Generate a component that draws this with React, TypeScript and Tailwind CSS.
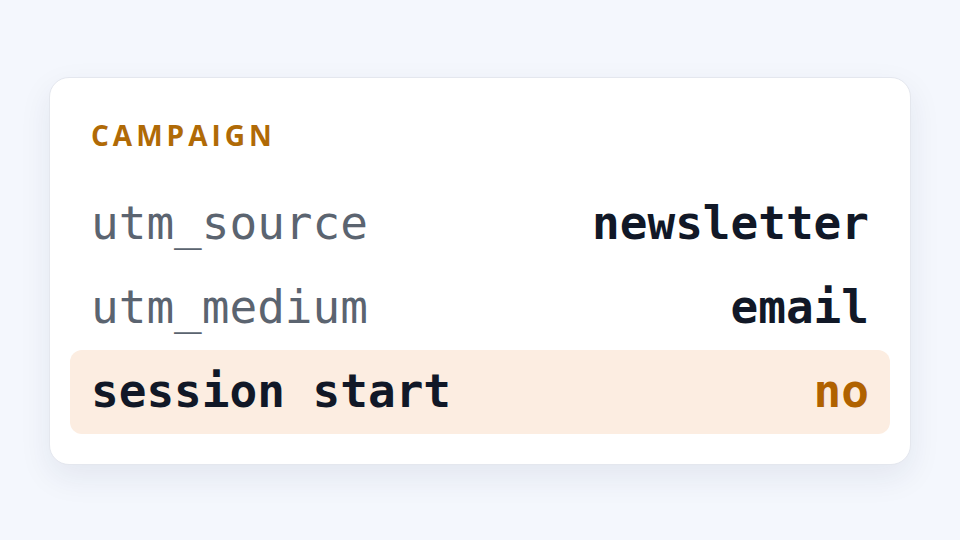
const rows = [
  { label: "utm_source", value: "newsletter" },
  { label: "utm_medium", value: "email" },
  { label: "session start", value: "no", active: true },
];

export default function App() {
  return (
    <div className="flex h-[540px] w-[960px] items-center justify-center bg-[#f4f7fd]">
      <div className="mt-[1px] w-[862px] rounded-[20px] border border-[#e4e7ee] bg-white px-5 pt-[39px] pb-[30px] shadow-[0_12px_32px_rgba(30,41,80,0.08)]">
        <h2 className="px-[21px] font-['Open_Sans',sans-serif] text-[28px] leading-[36px] font-bold tracking-[4px] text-[#b06a06]">
          CAMPAIGN
        </h2>
        <div className="mt-[29px] flex flex-col font-['DejaVu_Sans_Mono',monospace] text-[46px]">
          {rows.map((r) =>
            r.active ? (
              <div
                key={r.label}
                className="flex h-[84px] items-center justify-between rounded-[12px] bg-[#fcede1] px-[21px] font-bold"
              >
                <span className="text-[#111827]">{r.label}</span>
                <span className="text-[#b06200]">{r.value}</span>
              </div>
            ) : (
              <div key={r.label} className="flex h-[84px] items-center justify-between px-[21px]">
                <span className="text-[#5b6470]">{r.label}</span>
                <span className="font-bold text-[#111827]">{r.value}</span>
              </div>
            )
          )}
        </div>
      </div>
    </div>
  );
}
